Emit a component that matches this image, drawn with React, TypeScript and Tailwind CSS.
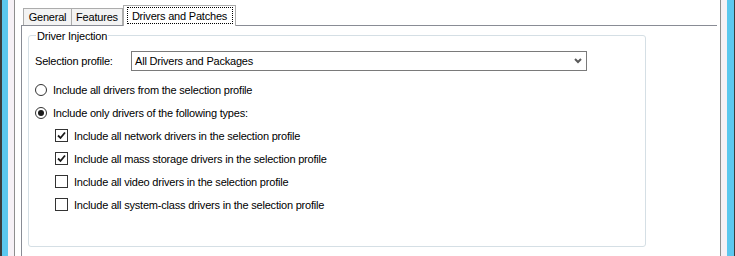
const font = { fontFamily: '"Liberation Sans", Arial, sans-serif' }

function Radio({ checked, label }: { checked?: boolean; label: string }) {
  return (
    <div className="flex h-[23px] items-center gap-[6px]">
      <span className="flex h-[12px] w-[12px] items-center justify-center rounded-full border border-[#333333] bg-white">
        {checked && <span className="h-[6px] w-[6px] rounded-full bg-[#1a1a1a]" />}
      </span>
      <span>{label}</span>
    </div>
  )
}

function Check({ checked, label }: { checked?: boolean; label: string }) {
  return (
    <div className="flex h-[23px] items-center gap-[6px] pl-[20px]">
      <span className="flex h-[13px] w-[13px] items-center justify-center border border-[#333333] bg-white">
        {checked && (
          <svg width="11" height="11" viewBox="0 0 11 11">
            <path d="M2 5.5 L4.5 8 L9 2.5" fill="none" stroke="#1a1a1a" strokeWidth="1.8" />
          </svg>
        )}
      </span>
      <span>{label}</span>
    </div>
  )
}

export default function App() {
  return (
    <div
      className="flex h-[256px] w-[735px] overflow-hidden bg-white text-[11px] leading-[14px] tracking-[-0.2px] text-black"
      style={font}
    >
      {/* left window frame */}
      <div className="w-[2px] bg-[#3c3c3c]" />
      <div className="w-[6px] bg-[#5cc8ef]" />
      <div className="w-[6px] bg-[#f6f1f6]" />
      <div className="w-px bg-[#8e8e8e]" />
      <div className="w-[6px] bg-white" />

      <div className="flex flex-1 flex-col">
        {/* Tabs */}
        <div className="flex h-[25px] items-end pl-[2px]">
          <div className="flex h-[17px] w-[49px] items-center justify-center border-l border-r border-t border-[#acacac] bg-[#f3f3f3]">
            General
          </div>
          <div className="flex h-[17px] w-[51px] items-center justify-center border-r border-t border-[#acacac] bg-[#f3f3f3]">
            Features
          </div>
          <div className="relative z-10 -mb-px flex h-[21px] w-[113px] items-start justify-center border-l border-r border-t border-[#acacac] bg-white pt-[1px]">
            <div className="flex h-[17px] w-[106px] items-center justify-center border border-dotted border-black">
              Drivers and Patches
            </div>
          </div>
        </div>

        {/* Pane */}
        <div className="mr-[3px] flex-1 border-l border-t border-[#898c95] bg-white pl-[6px] pt-[9px]">
          <div className="relative h-[212px] w-[618px] rounded-[3px] border border-[#d5dfe5] px-[6px] pt-[15px]">
            <span className="absolute left-[7px] top-[-7px] bg-white px-[1px]">Driver Injection</span>

            <div className="flex h-[20px] items-center">
              <span className="w-[96px]">Selection profile:</span>
              <div className="flex h-[20px] w-[456px] items-center justify-between border border-[#7a7a7a] pl-[3px] pr-[4px]">
                <span>All Drivers and Packages</span>
                <svg width="8" height="6" viewBox="0 0 8 6">
                  <path d="M1 1 L4 4 L7 1" fill="none" stroke="#5a5a5a" strokeWidth="2" />
                </svg>
              </div>
            </div>

            <div className="mt-[7px] flex flex-col">
              <Radio label="Include all drivers from the selection profile" />
              <Radio checked label="Include only drivers of the following types:" />
              <Check checked label="Include all network drivers in the selection profile" />
              <Check checked label="Include all mass storage drivers in the selection profile" />
              <Check label="Include all video drivers in the selection profile" />
              <Check label="Include all system-class drivers in the selection profile" />
            </div>
          </div>
        </div>
      </div>

      {/* right window frame */}
      <div className="w-px bg-[#8e8e8e]" />
      <div className="w-[6px] bg-[#f6f1f6]" />
      <div className="w-[7px] bg-[#5cc8ef]" />
      <div className="w-px bg-[#3c3c3c]" />
    </div>
  )
}
